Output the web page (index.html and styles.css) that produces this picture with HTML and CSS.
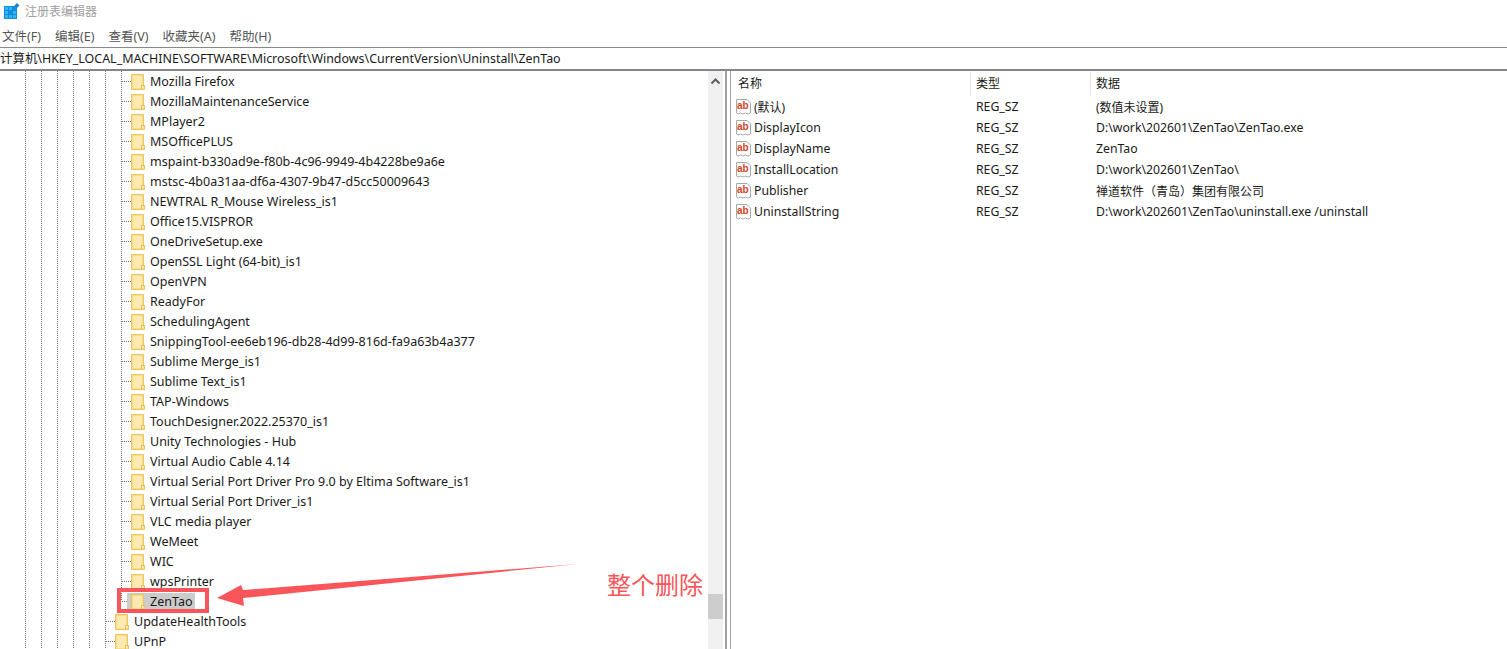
FILE: index.html
```html
<!DOCTYPE html>
<html lang="zh-CN">
<head>
<meta charset="utf-8">
<title>注册表编辑器</title>
<link rel="stylesheet" href="styles.css">
</head>
<body>
<svg width="0" height="0" class="defs">
  <defs>
    <symbol id="folder" viewBox="0 0 14 16">
      <path d="M0.5 0.5H12.5V11.5H13.5V15.5H0.5Z" fill="#fbdc86" stroke="#e9c566"/>
      <rect x="2" y="2" width="9" height="12" fill="#feeab0"/>
      <path d="M10.5 15V11.5H13.5" fill="#fff3cc" stroke="#e2bb5c"/>
    </symbol>
    <symbol id="ab" viewBox="0 0 16 17">
      <path d="M0.5 1.5H11L14.5 5V15L12 16L9.5 15L7 16L4.5 15L2 16L0.5 15Z" fill="#fff" stroke="#a8a8a8"/>
      <text x="1" y="10.5" class="ab-text">ab</text>
    </symbol>
  </defs>
</svg>
<div class="window">
  <header class="titlebar">
    <svg class="app-icon" width="16" height="18" viewBox="0 0 16 18">
      <rect x="0" y="4" width="13" height="13" fill="#0f8fdd"/>
      <rect x="1" y="5" width="3" height="3" fill="#35b4f4"/>
      <rect x="5" y="5" width="3" height="3" fill="#35b4f4"/>
      <rect x="1" y="9" width="3" height="3" fill="#35b4f4"/>
      <rect x="9" y="9" width="3" height="3" fill="#35b4f4"/>
      <rect x="1" y="13" width="3" height="3" fill="#35b4f4"/>
      <rect x="5" y="13" width="3" height="3" fill="#35b4f4"/>
      <rect x="9" y="13" width="3" height="3" fill="#35b4f4"/>
      <path d="M13 1L15.5 3.5L13 6L10.5 3.5Z" fill="#1b86cf"/>
    </svg>
    <span class="title">注册表编辑器</span>
  </header>
  <nav class="menubar">
    <span>文件(F)</span><span>编辑(E)</span><span>查看(V)</span><span>收藏夹(A)</span><span>帮助(H)</span>
  </nav>
  <div class="address">计算机\HKEY_LOCAL_MACHINE\SOFTWARE\Microsoft\Windows\CurrentVersion\Uninstall\ZenTao</div>
  <main class="panes">
    <section class="tree-pane">
      <div class="tree">
        <div class="row"><i></i><i></i><i></i><i></i><i></i><i></i><b></b><svg class="folder"><use href="#folder"/></svg><span class="label">Mozilla Firefox</span></div>
        <div class="row"><i></i><i></i><i></i><i></i><i></i><i></i><b></b><svg class="folder"><use href="#folder"/></svg><span class="label">MozillaMaintenanceService</span></div>
        <div class="row"><i></i><i></i><i></i><i></i><i></i><i></i><b></b><svg class="folder"><use href="#folder"/></svg><span class="label">MPlayer2</span></div>
        <div class="row"><i></i><i></i><i></i><i></i><i></i><i></i><b></b><svg class="folder"><use href="#folder"/></svg><span class="label">MSOfficePLUS</span></div>
        <div class="row"><i></i><i></i><i></i><i></i><i></i><i></i><b></b><svg class="folder"><use href="#folder"/></svg><span class="label">mspaint-b330ad9e-f80b-4c96-9949-4b4228be9a6e</span></div>
        <div class="row"><i></i><i></i><i></i><i></i><i></i><i></i><b></b><svg class="folder"><use href="#folder"/></svg><span class="label">mstsc-4b0a31aa-df6a-4307-9b47-d5cc50009643</span></div>
        <div class="row"><i></i><i></i><i></i><i></i><i></i><i></i><b></b><svg class="folder"><use href="#folder"/></svg><span class="label">NEWTRAL R_Mouse Wireless_is1</span></div>
        <div class="row"><i></i><i></i><i></i><i></i><i></i><i></i><b></b><svg class="folder"><use href="#folder"/></svg><span class="label">Office15.VISPROR</span></div>
        <div class="row"><i></i><i></i><i></i><i></i><i></i><i></i><b></b><svg class="folder"><use href="#folder"/></svg><span class="label">OneDriveSetup.exe</span></div>
        <div class="row"><i></i><i></i><i></i><i></i><i></i><i></i><b></b><svg class="folder"><use href="#folder"/></svg><span class="label">OpenSSL Light (64-bit)_is1</span></div>
        <div class="row"><i></i><i></i><i></i><i></i><i></i><i></i><b></b><svg class="folder"><use href="#folder"/></svg><span class="label">OpenVPN</span></div>
        <div class="row"><i></i><i></i><i></i><i></i><i></i><i></i><b></b><svg class="folder"><use href="#folder"/></svg><span class="label">ReadyFor</span></div>
        <div class="row"><i></i><i></i><i></i><i></i><i></i><i></i><b></b><svg class="folder"><use href="#folder"/></svg><span class="label">SchedulingAgent</span></div>
        <div class="row"><i></i><i></i><i></i><i></i><i></i><i></i><b></b><svg class="folder"><use href="#folder"/></svg><span class="label">SnippingTool-ee6eb196-db28-4d99-816d-fa9a63b4a377</span></div>
        <div class="row"><i></i><i></i><i></i><i></i><i></i><i></i><b></b><svg class="folder"><use href="#folder"/></svg><span class="label">Sublime Merge_is1</span></div>
        <div class="row"><i></i><i></i><i></i><i></i><i></i><i></i><b></b><svg class="folder"><use href="#folder"/></svg><span class="label">Sublime Text_is1</span></div>
        <div class="row"><i></i><i></i><i></i><i></i><i></i><i></i><b></b><svg class="folder"><use href="#folder"/></svg><span class="label">TAP-Windows</span></div>
        <div class="row"><i></i><i></i><i></i><i></i><i></i><i></i><b></b><svg class="folder"><use href="#folder"/></svg><span class="label">TouchDesigner.2022.25370_is1</span></div>
        <div class="row"><i></i><i></i><i></i><i></i><i></i><i></i><b></b><svg class="folder"><use href="#folder"/></svg><span class="label">Unity Technologies - Hub</span></div>
        <div class="row"><i></i><i></i><i></i><i></i><i></i><i></i><b></b><svg class="folder"><use href="#folder"/></svg><span class="label">Virtual Audio Cable 4.14</span></div>
        <div class="row"><i></i><i></i><i></i><i></i><i></i><i></i><b></b><svg class="folder"><use href="#folder"/></svg><span class="label">Virtual Serial Port Driver Pro 9.0 by Eltima Software_is1</span></div>
        <div class="row"><i></i><i></i><i></i><i></i><i></i><i></i><b></b><svg class="folder"><use href="#folder"/></svg><span class="label">Virtual Serial Port Driver_is1</span></div>
        <div class="row"><i></i><i></i><i></i><i></i><i></i><i></i><b></b><svg class="folder"><use href="#folder"/></svg><span class="label">VLC media player</span></div>
        <div class="row"><i></i><i></i><i></i><i></i><i></i><i></i><b></b><svg class="folder"><use href="#folder"/></svg><span class="label">WeMeet</span></div>
        <div class="row"><i></i><i></i><i></i><i></i><i></i><i></i><b></b><svg class="folder"><use href="#folder"/></svg><span class="label">WIC</span></div>
        <div class="row"><i></i><i></i><i></i><i></i><i></i><i></i><b></b><svg class="folder"><use href="#folder"/></svg><span class="label">wpsPrinter</span></div>
        <div class="row"><i></i><i></i><i></i><i></i><i></i><i></i><b class="last"></b><div class="selected"><svg class="folder"><use href="#folder"/></svg><span class="label">ZenTao</span></div></div>
        <div class="row"><i></i><i></i><i></i><i></i><i></i><b></b><svg class="folder"><use href="#folder"/></svg><span class="label">UpdateHealthTools</span></div>
        <div class="row"><i></i><i></i><i></i><i></i><i></i><b></b><svg class="folder"><use href="#folder"/></svg><span class="label">UPnP</span></div>
      </div>
      <div class="scrollbar">
        <svg class="scroll-up" width="17" height="20" viewBox="0 0 17 20"><path d="M4.5 12.5L8.5 8.5L12.5 12.5" fill="none" stroke="#606060" stroke-width="2"/></svg>
        <div class="thumb"></div>
      </div>
    </section>
    <div class="splitter"></div>
    <section class="list-pane">
      <div class="list-head">
        <span>名称</span><span>类型</span><span>数据</span>
      </div>
      <div class="list-row"><span class="name"><svg class="ab"><use href="#ab"/></svg><em class="cjk">(默认)</em></span><span>REG_SZ</span><span><em class="cjk">(数值未设置)</em></span></div>
      <div class="list-row"><span class="name"><svg class="ab"><use href="#ab"/></svg>DisplayIcon</span><span>REG_SZ</span><span>D:\work\202601\ZenTao\ZenTao.exe</span></div>
      <div class="list-row"><span class="name"><svg class="ab"><use href="#ab"/></svg>DisplayName</span><span>REG_SZ</span><span>ZenTao</span></div>
      <div class="list-row"><span class="name"><svg class="ab"><use href="#ab"/></svg>InstallLocation</span><span>REG_SZ</span><span>D:\work\202601\ZenTao\</span></div>
      <div class="list-row"><span class="name"><svg class="ab"><use href="#ab"/></svg>Publisher</span><span>REG_SZ</span><span><em class="cjk">禅道软件（青岛）集团有限公司</em></span></div>
      <div class="list-row"><span class="name"><svg class="ab"><use href="#ab"/></svg>UninstallString</span><span>REG_SZ</span><span>D:\work\202601\ZenTao\uninstall.exe /uninstall</span></div>
    </section>
  </main>
  <div class="mark-box"></div>
  <svg class="mark-arrow" width="370" height="50" viewBox="0 0 370 50">
    <path d="M0 36L24 23L26 28L361 2L26 36L27 44Z" fill="#f8565a"/>
  </svg>
  <div class="mark-text">整个删除</div>
</div>
</body>
</html>
```
FILE: styles.css
```css
html, body {
  margin: 0;
  padding: 0;
  background: #fff;
}
.defs {
  position: absolute;
}
.window {
  position: relative;
  width: 1507px;
  height: 649px;
  overflow: hidden;
  display: flex;
  flex-direction: column;
  font-family: "Noto Sans", "Noto Sans CJK SC", sans-serif;
  font-size: 12.25px;
  color: #1a1a1a;
}
.titlebar {
  height: 22px;
  padding: 0 0 2px 4px;
  flex: none;
  display: flex;
  align-items: center;
}
.app-icon {
  margin-right: 5px;
}
.title {
  font-size: 12px;
  color: #a0a0a0;
}
.menubar {
  height: 23px;
  flex: none;
  display: flex;
  align-items: center;
  gap: 14px;
  padding-left: 2px;
  font-size: 12.5px;
  color: #555;
}
.address {
  height: 21px;
  flex: none;
  line-height: 21px;
  border-top: 1px solid #8a8a8a;
  font-size: 12.45px;
  white-space: nowrap;
}
.panes {
  flex: 1;
  min-height: 0;
  display: flex;
  border-top: 2px solid #85858b;
}
.tree-pane {
  width: 725px;
  flex: none;
  display: flex;
}
.tree {
  width: 708px;
  flex: none;
  padding-left: 25px;
  box-sizing: border-box;
}
.row {
  height: 20px;
  display: flex;
  align-items: center;
  white-space: nowrap;
}
.row i {
  width: 16px;
  height: 20px;
  flex: none;
  background: repeating-linear-gradient(to bottom, #777 0 1px, transparent 1px 2px) left top / 1px 100% no-repeat;
}
.row b {
  width: 16px;
  height: 20px;
  margin-right: -6px;
  flex: none;
  background:
    repeating-linear-gradient(to bottom, #777 0 1px, transparent 1px 2px) left top / 1px 100% no-repeat,
    repeating-linear-gradient(to right, #777 0 1px, transparent 1px 2px) 1px 10px / 9px 1px no-repeat;
}
.row b.last {
  background:
    repeating-linear-gradient(to bottom, #777 0 1px, transparent 1px 2px) left top / 1px 10px no-repeat,
    repeating-linear-gradient(to right, #777 0 1px, transparent 1px 2px) 1px 10px / 9px 1px no-repeat;
}
.folder {
  width: 14px;
  height: 16px;
  margin-top: 2px;
  flex: none;
}
.label {
  margin-left: 5px;
  font-size: 12.5px;
  color: #1a1a1a;
}
.selected {
  display: flex;
  align-items: center;
  height: 18px;
  margin: 1px 0 0 -4px;
  padding: 0 3px 0 4px;
  background: #cccccc;
}
.selected .folder {
  margin-top: 0;
}
.scrollbar {
  position: relative;
  width: 15px;
  flex: none;
  background: #f0f0f0;
}
.scroll-up {
  display: block;
  margin-left: -1px;
}
.thumb {
  position: absolute;
  left: 0;
  top: 523px;
  width: 15px;
  height: 25px;
  background: #cdcdcd;
}
.splitter {
  width: 3px;
  flex: none;
  border-left: 2px solid #a0a0a0;
  border-right: 1px solid #a0a0a0;
}
.list-pane {
  flex: 1;
  min-width: 0;
  padding-top: 1px;
}
.list-head {
  height: 24px;
  display: grid;
  grid-template-columns: 240px 120px 1fr;
}
.list-head span {
  padding-left: 5px;
  line-height: 24px;
  border-right: 1px solid #e5e5e5;
  font-size: 12px;
}
.list-head span:first-child {
  padding-left: 7px;
}
.list-head span:last-child {
  border-right: 0;
}
.list-row {
  height: 21px;
  display: grid;
  grid-template-columns: 240px 120px 1fr;
  align-items: center;
  white-space: nowrap;
}
.list-row span {
  padding-left: 5px;
  display: flex;
  align-items: center;
}
.cjk {
  font-style: normal;
  font-size: 12px;
}
.ab {
  width: 16px;
  height: 17px;
  margin: 0 2px 0 0;
  flex: none;
}
.ab-text {
  font-family: "Liberation Sans", sans-serif;
  font-size: 10px;
  font-weight: 700;
  fill: #d8431f;
}
.mark-box {
  position: absolute;
  left: 117px;
  top: 588px;
  width: 84px;
  height: 17px;
  border: 4px solid #f8565a;
}
.mark-arrow {
  position: absolute;
  left: 217px;
  top: 562px;
}
.mark-text {
  position: absolute;
  left: 607px;
  top: 567px;
  font-size: 24px;
  line-height: 34px;
  color: #f8565a;
  font-family: "Noto Sans CJK SC", sans-serif;
}
```
